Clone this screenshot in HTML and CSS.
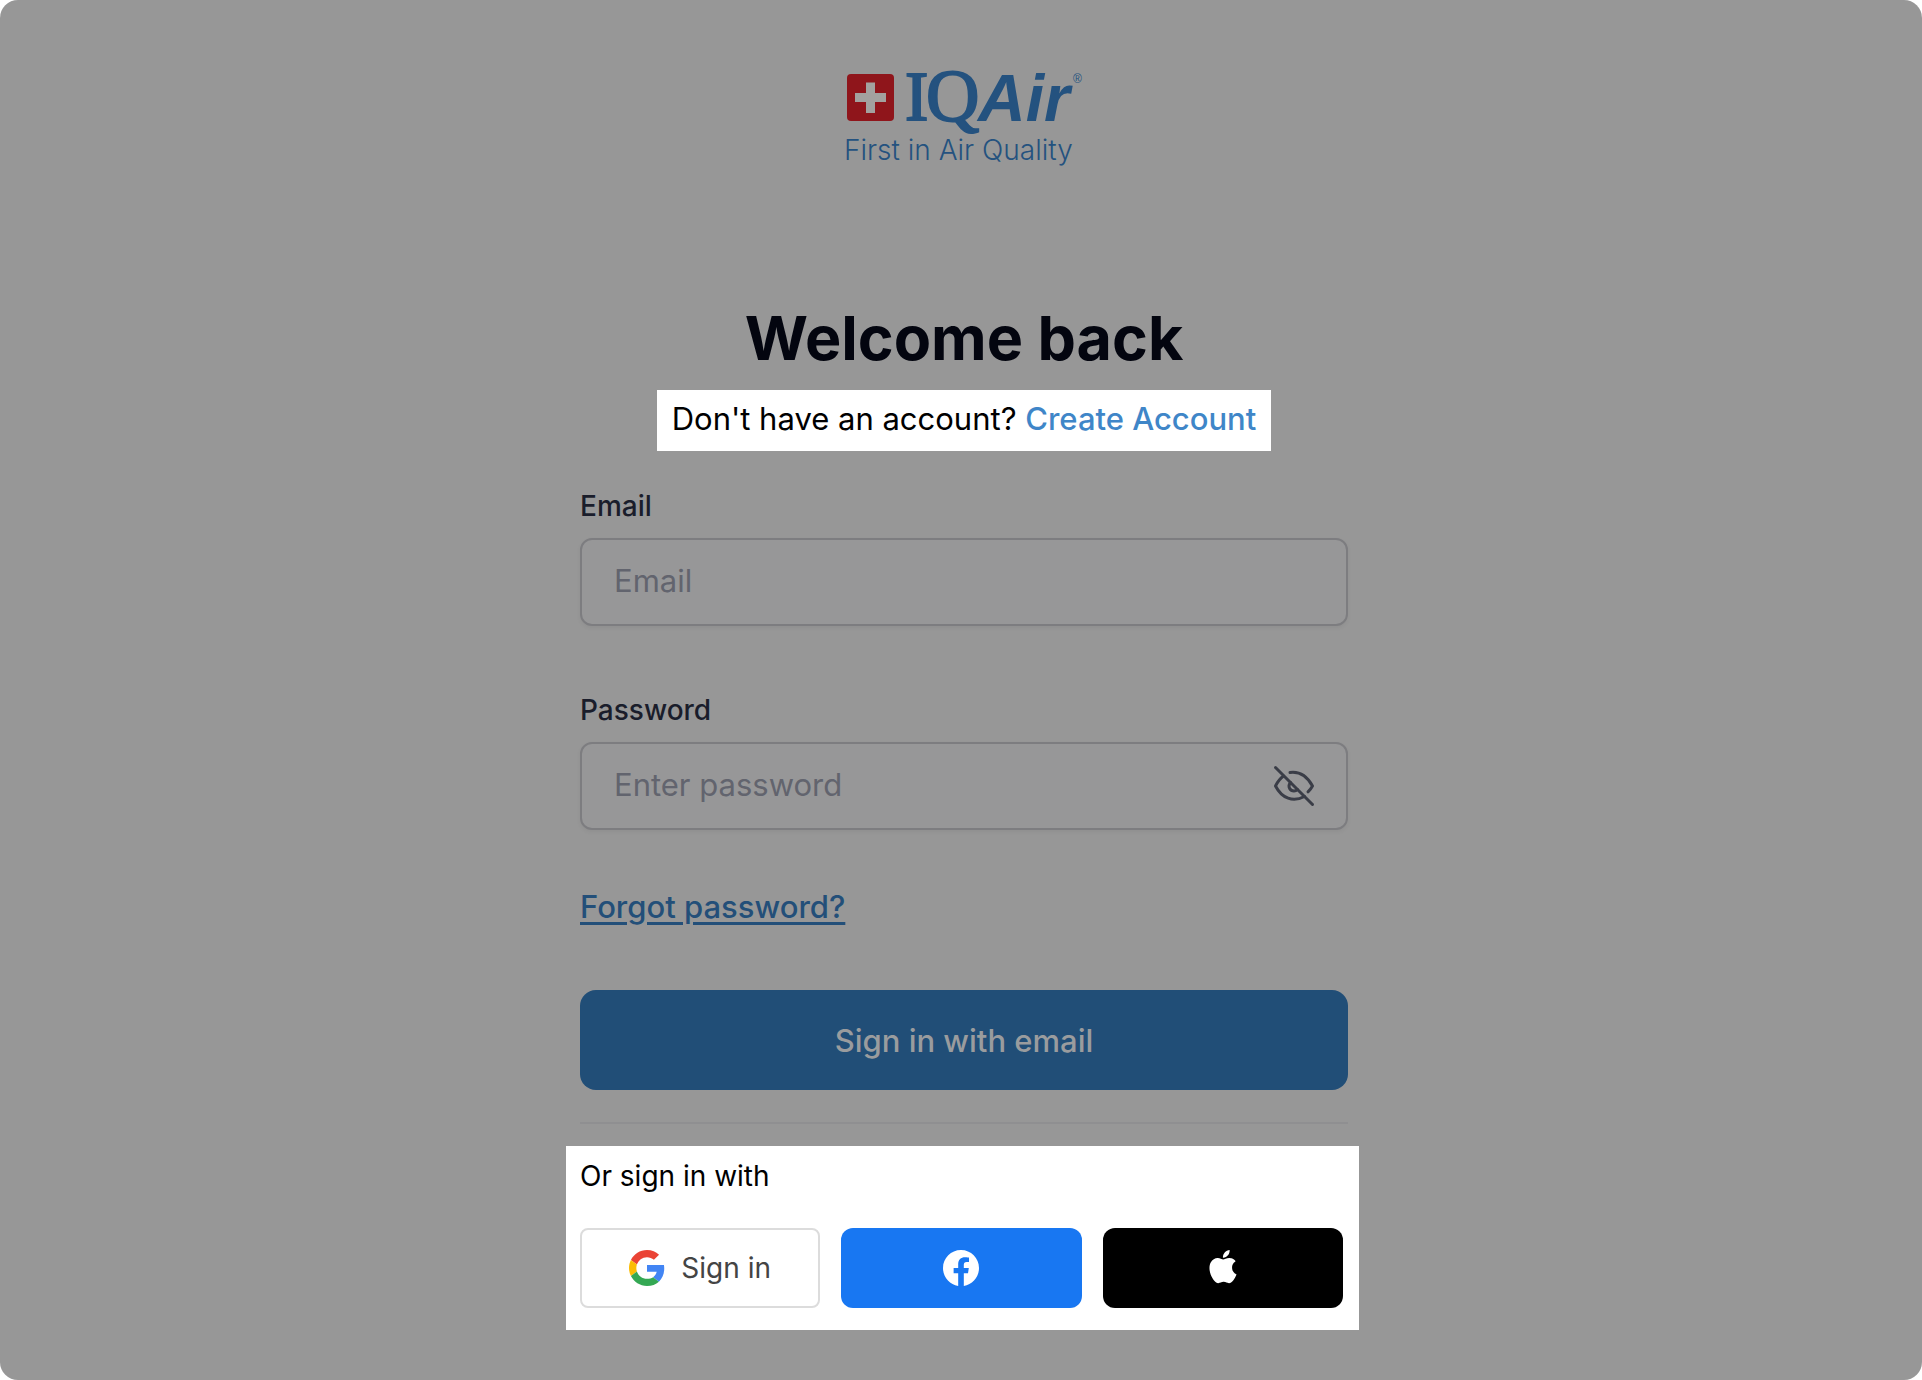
FILE: index.html
```html
<!DOCTYPE html>
<html lang="en">
<head>
	<meta charset="utf-8">
	<title>Sign in - IQAir</title>
	<link rel="stylesheet" href="styles.css">
</head>
<body>
	<div class="page">
		<main class="container">
			<svg class="logo" viewBox="0 -20 240 120" role="img" aria-label="IQAir, First in Air Quality">
				<rect class="logo-flag" x="3" y="4" width="47" height="47" rx="4"/>
				<path class="logo-cross" d="M22 12.500h9v10.500h11v9h-11v11h-9v-11h-11v-9h11z"/>
				<text class="logo-serif" x="61" y="50">I</text>
				<text class="logo-serif logo-q" x="82" y="51">Q</text>
				<text class="logo-bold" x="134" y="51">Air</text>
				<text class="logo-mark" x="229" y="13">®</text>
				<text class="logo-tagline" x="0" y="90">First in Air Quality</text>
			</svg>

			<h1>Welcome back</h1>
			<p class="register">Don't have an account? <a href="#">Create Account</a></p>

			<form class="form">
				<div class="field">
					<label for="email">Email</label>
					<input type="email" id="email" placeholder="Email">
				</div>
				<div class="field">
					<label for="password">Password</label>
					<div class="password-box">
						<input type="password" id="password" placeholder="Enter password">
						<button type="button" class="toggle" aria-label="Show password">
							<svg viewBox="0 0 48 48">
								<path d="M5.500 5.500l37 37"/>
								<path d="M20 10.500C31 9 37.500 15 42.500 24c-1.200 2.200-2.500 4-4.500 5.800"/>
								<path d="M13.500 14C10 16.500 7.500 20 5.500 24 12 36.500 23 40.500 34.500 34.500"/>
								<path d="M20.500 20.500C17 25 20.500 29 24 29c1.500 0 2.500-.5 3.500-1.500"/>
							</svg>
						</button>
					</div>
				</div>
				<a class="forgot" href="#">Forgot password?</a>
				<button type="submit" class="submit">Sign in with email</button>
			</form>

			<hr>

			<section class="social">
				<p>Or sign in with</p>
				<div class="social-buttons">
					<button type="button" class="google">
						<svg viewBox="0 0 48 48">
							<path fill="#ea4335" d="M24 9.500c3.540 0 6.710 1.220 9.210 3.600l6.850-6.850C35.900 2.380 30.470 0 24 0 14.620 0 6.510 5.380 2.560 13.220l7.980 6.190C12.430 13.720 17.740 9.500 24 9.500z"/>
							<path fill="#4285f4" d="M46.980 24.550c0-1.570-.15-3.090-.38-4.550H24v9.020h12.940c-.58 2.960-2.260 5.480-4.780 7.180l7.730 6c4.510-4.180 7.090-10.360 7.090-17.650z"/>
							<path fill="#fbbc05" d="M10.530 28.590c-.48-1.450-.76-2.990-.76-4.590s.27-3.140.76-4.590l-7.980-6.190C.92 16.460 0 20.120 0 24c0 3.880.92 7.540 2.560 10.780l7.970-6.190z"/>
							<path fill="#34a853" d="M24 48c6.480 0 11.930-2.130 15.890-5.810l-7.730-6c-2.150 1.450-4.920 2.300-8.160 2.300-6.260 0-11.570-4.220-13.470-9.910l-7.980 6.190C6.510 42.620 14.620 48 24 48z"/>
						</svg>
						Sign in
					</button>
					<button type="button" class="facebook" aria-label="Sign in with Facebook">
						<svg viewBox="0 0 24 24">
							<path d="M24 12.073c0-6.627-5.373-12-12-12s-12 5.373-12 12c0 5.990 4.388 10.954 10.125 11.854v-8.385H7.078v-3.470h3.047V9.430c0-3.007 1.792-4.669 4.533-4.669 1.312 0 2.686.235 2.686.235v2.953H15.830c-1.491 0-1.956.925-1.956 1.874v2.250h3.328l-.532 3.470h-2.796v8.385C19.612 23.027 24 18.062 24 12.073z"/>
						</svg>
					</button>
					<button type="button" class="apple" aria-label="Sign in with Apple">
						<svg viewBox="0 0 24 26">
							<path d="M12.152 6.896c-.948 0-2.415-1.078-3.960-1.040-2.040.027-3.910 1.183-4.961 3.014-2.117 3.675-.546 9.103 1.519 12.090 1.013 1.454 2.208 3.090 3.792 3.039 1.520-.065 2.090-.987 3.935-.987 1.831 0 2.350.987 3.960.948 1.637-.026 2.676-1.480 3.676-2.948 1.156-1.688 1.636-3.325 1.662-3.415-.039-.013-3.182-1.221-3.220-4.857-.026-3.040 2.480-4.494 2.597-4.559-1.429-2.090-3.623-2.324-4.390-2.376-2-.156-3.675 1.090-4.610 1.090zM15.530 3.830c.843-1.012 1.400-2.427 1.245-3.830-1.207.052-2.662.805-3.532 1.818-.780.896-1.454 2.338-1.273 3.714 1.338.104 2.715-.688 3.559-1.701"/>
						</svg>
					</button>
				</div>
			</section>
		</main>
	</div>
</body>
</html>
```
FILE: styles.css
```css
* {
	box-sizing: border-box;
}
body {
	margin: 0;
	background-color: #fff;
	font-family: Inter, "Liberation Sans", sans-serif;
	font-size: 31px;
	line-height: 48px;
	color: #000;
}
.page {
	min-height: 100vh;
	padding: 50px 0 50px 6px;
	background-color: #979797;
	border-radius: 18px;
}
.container {
	display: flex;
	flex-direction: column;
	align-items: center;
	max-width: 768px;
	margin: 0 auto;
}

/* logo */
.logo {
	width: 240px;
	height: 120px;
}
.logo-flag {
	fill: #8f151b;
}
.logo-cross {
	fill: #a3a19f;
}
.logo text {
	fill: #24527f;
}
.logo-serif {
	font-family: "Liberation Serif", serif;
	font-size: 70px;
	stroke: #24527f;
	stroke-width: 2px;
}
.logo-q {
	font-size: 74px;
}
.logo-bold {
	font-family: "Liberation Sans", sans-serif;
	font-size: 66px;
	font-weight: bold;
	font-style: italic;
}
.logo-mark {
	font-family: "Liberation Sans", sans-serif;
	font-size: 12px;
}
.logo-tagline {
	font-size: 28px;
	font-weight: 300;
}

h1 {
	margin: 136px 0 20px;
	font-size: 61px;
	line-height: 64px;
	font-weight: 700;
	color: #03050f;
}
.register {
	margin: 0 0 35px;
	padding: 5px 15px 8px;
	background-color: #fff;
}
.register a {
	color: #3f86c8;
	font-weight: 500;
	text-decoration: none;
}

/* form */
.form {
	display: flex;
	flex-direction: column;
	align-items: flex-start;
	width: 100%;
}
.field {
	display: flex;
	flex-direction: column;
	gap: 12px;
	width: 100%;
	margin-bottom: 64px;
}
.field label {
	font-size: 28px;
	line-height: 40px;
	font-weight: 500;
	color: #1a1d2b;
}
.field input {
	width: 100%;
	height: 88px;
	padding: 0 32px 4px;
	border: 2px solid #7d7d80;
	border-radius: 12px;
	background-color: #979798;
	box-shadow: 0 2px 4px rgba(0, 0, 0, 0.05);
	font: inherit;
	color: #1a1d2b;
}
.field input::placeholder {
	color: #62646e;
	opacity: 1;
}
.password-box {
	position: relative;
}
.password-box input {
	display: block;
	padding-right: 96px;
}
.toggle {
	position: absolute;
	top: 20px;
	right: 30px;
	width: 48px;
	height: 48px;
	padding: 0;
	border: 0;
	background: none;
}
.toggle svg {
	display: block;
	fill: none;
	stroke: #3a3d47;
	stroke-width: 3px;
	stroke-linecap: round;
	stroke-linejoin: round;
}
.forgot {
	margin: -11px 0 59px;
	color: #234f79;
	font-weight: 500;
	text-decoration-thickness: 3px;
	text-underline-offset: 4px;
}
.submit {
	width: 100%;
	height: 100px;
	padding: 2px 0 0;
	border: 0;
	border-radius: 16px;
	background-color: #214e77;
	color: #9a9c9e;
	font: inherit;
	font-weight: 500;
}
hr {
	width: 100%;
	height: 2px;
	margin: 32px 0 22px;
	border: 0;
	background-color: #8f8f91;
}

/* other providers */
.social {
	align-self: flex-start;
	width: calc(100% + 25px);
	margin-left: -14px;
	padding: 10px 16px 22px 14px;
	background-color: #fff;
}
.social p {
	margin: 0 0 32px;
	font-size: 28px;
	line-height: 40px;
}
.social-buttons {
	display: grid;
	grid-template-columns: repeat(3, 1fr);
	gap: 21px;
}
.social-buttons button {
	display: flex;
	align-items: center;
	justify-content: center;
	gap: 16px;
	height: 80px;
	padding: 0;
	border: 0;
	border-radius: 12px;
	font: inherit;
	font-size: 28px;
}
.social-buttons svg {
	width: 36px;
	height: 36px;
	fill: #fff;
}
.social-buttons .google {
	border: 2px solid #dcdcdc;
	border-radius: 8px;
	background-color: #fff;
	color: #444;
}
.social-buttons .facebook {
	background-color: #1877f2;
}
.social-buttons .apple {
	background-color: #000;
}
```
